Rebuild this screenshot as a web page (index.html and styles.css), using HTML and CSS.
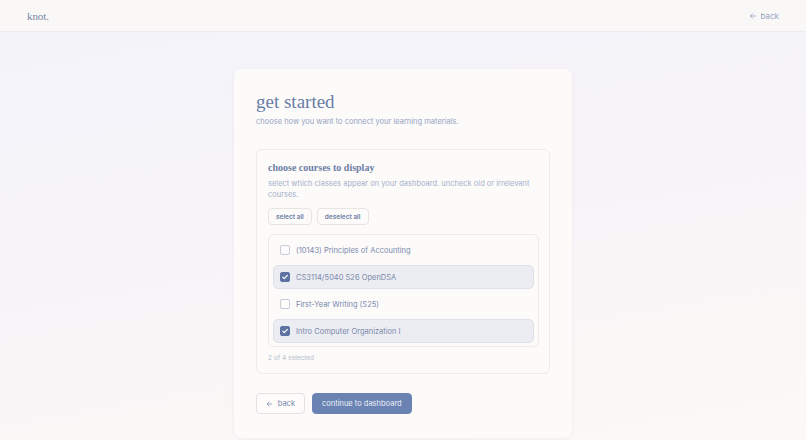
FILE: index.html
```html
<!DOCTYPE html>
<html lang="en">
<head>
<meta charset="utf-8">
<title>knot. — get started</title>
<link rel="stylesheet" href="styles.css">
</head>
<body>
<header class="topbar">
  <span class="logo">knot.</span>
  <a class="top-back" href="#"><svg class="arrow" viewBox="0 0 12 12" width="8" height="8"><path d="M10 6H2.5M5.5 2.5L2 6l3.5 3.5" fill="none" stroke="currentColor" stroke-width="1.3" stroke-linecap="round" stroke-linejoin="round"/></svg>back</a>
</header>
<main class="stage">
  <section class="card">
    <h1 class="title">get started</h1>
    <p class="subtitle">choose how you want to connect your learning materials.</p>
    <div class="panel">
      <h2 class="panel-title">choose courses to display</h2>
      <p class="panel-desc">select which classes appear on your dashboard. uncheck old or irrelevant courses.</p>
      <div class="pill-row">
        <button class="pill">select all</button>
        <button class="pill">deselect all</button>
      </div>
      <ul class="course-list">
        <li class="course"><span class="box"></span>(10143) Principles of Accounting</li>
        <li class="course checked"><span class="box"><svg viewBox="0 0 10 10" width="8" height="8"><path d="M2.2 5.2l1.9 1.9 3.8-4.2" fill="none" stroke="#fff" stroke-width="1.5" stroke-linecap="round" stroke-linejoin="round"/></svg></span>CS3114/5040 S26 OpenDSA</li>
        <li class="course"><span class="box"></span>First-Year Writing (S25)</li>
        <li class="course checked"><span class="box"><svg viewBox="0 0 10 10" width="8" height="8"><path d="M2.2 5.2l1.9 1.9 3.8-4.2" fill="none" stroke="#fff" stroke-width="1.5" stroke-linecap="round" stroke-linejoin="round"/></svg></span>Intro Computer Organization I</li>
      </ul>
      <p class="count">2 of 4 selected</p>
    </div>
    <div class="actions">
      <button class="btn btn-ghost"><svg class="arrow" viewBox="0 0 12 12" width="8" height="8"><path d="M10 6H2.5M5.5 2.5L2 6l3.5 3.5" fill="none" stroke="currentColor" stroke-width="1.3" stroke-linecap="round" stroke-linejoin="round"/></svg>back</button>
      <button class="btn btn-primary">continue to dashboard</button>
    </div>
  </section>
</main>
</body>
</html>
```

FILE: styles.css
```css
* { box-sizing: border-box; }
html, body { margin: 0; padding: 0; }
body {
  width: 806px;
  height: 440px;
  overflow: hidden;
  font-family: Inter, "Noto Sans", sans-serif;
  background: linear-gradient(170deg, #f4f3fa 0%, #f6f4f8 45%, #fcf8f5 100%);
  color: #6b7ca5;
}
.topbar {
  height: 32px;
  display: flex;
  align-items: center;
  justify-content: space-between;
  padding: 0 27px 0 27px;
  background: #f9f8f6;
  border-bottom: 1px solid #ecebf0;
}
.logo {
  font-family: "Liberation Serif", serif;
  font-size: 11px;
  color: #7585a8;
  letter-spacing: -0.1px;
}
.top-back {
  display: flex;
  align-items: center;
  gap: 4px;
  font-size: 8px;
  color: #98a3c0;
  text-decoration: none;
}
.stage {
  display: flex;
  justify-content: center;
  padding-top: 37px;
}
.card {
  width: 338px;
  height: 369px;
  background: #fcfbfa;
  border-radius: 8px;
  box-shadow: 0 1px 4px rgba(120, 120, 160, 0.08);
  padding: 22px 22px 0 22px;
}
.title {
  margin: 0;
  font-family: "Liberation Serif", serif;
  font-weight: normal;
  font-size: 19px;
  line-height: 22px;
  color: #6a7ca6;
}
.subtitle {
  margin: 4px 0 0;
  font-size: 7.5px;
  line-height: 10px;
  color: #97a2c2;
}
.panel {
  margin-top: 22px;
  border: 1px solid #efebe6;
  border-radius: 6px;
  padding: 11px 10px 11px 11px;
}
.panel-title {
  margin: 0;
  font-family: "Liberation Serif", serif;
  font-weight: bold;
  font-size: 10px;
  line-height: 13px;
  color: #6c7da5;
}
.panel-desc {
  margin: 4px 0 0;
  font-size: 7.5px;
  line-height: 11px;
  color: #a6afca;
}
.pill-row {
  display: flex;
  gap: 5px;
  margin-top: 8px;
}
.pill {
  font-family: Inter, "Noto Sans", sans-serif;
  font-size: 6.5px;
  font-weight: 600;
  color: #707fa4;
  background: #fcfbfa;
  border: 1px solid #e7e4e2;
  border-radius: 4px;
  height: 17px;
  padding: 0 7px;
}
.course-list {
  list-style: none;
  margin: 9px 0 0;
  padding: 3px 4px;
  border: 1px solid #eeebe7;
  border-radius: 6px;
}
.course {
  display: flex;
  align-items: center;
  gap: 6px;
  height: 24px;
  margin: 0;
  padding: 0 6px;
  font-size: 7.5px;
  color: #7a88ab;
  border: 1px solid transparent;
  border-radius: 5px;
}
.course + .course { margin-top: 3px; }
.course.checked {
  background: #ecedf2;
  border-color: #dfe1e8;
}
.box {
  width: 10px;
  height: 10px;
  flex: none;
  border: 1px solid #c9cbd6;
  border-radius: 2px;
  background: #fdfdfd;
  display: flex;
  align-items: center;
  justify-content: center;
}
.checked .box {
  background: #5f73a3;
  border-color: #5f73a3;
}
.count {
  margin: 7px 0 0;
  font-size: 6.5px;
  color: #b6bccd;
}
.actions {
  display: flex;
  gap: 7px;
  margin-top: 19px;
}
.btn {
  font-family: Inter, "Noto Sans", sans-serif;
  height: 21px;
  border-radius: 4px;
  font-size: 7.5px;
  display: flex;
  align-items: center;
  gap: 5px;
  padding: 0 9px;
}
.btn-ghost {
  width: 49px;
  justify-content: center;
  background: #fdfcfb;
  border: 1px solid #e3e2e4;
  color: #7a88ab;
}
.btn-primary {
  background: #6a83b3;
  border: 1px solid #6a83b3;
  color: #eef1f8;
}
```
